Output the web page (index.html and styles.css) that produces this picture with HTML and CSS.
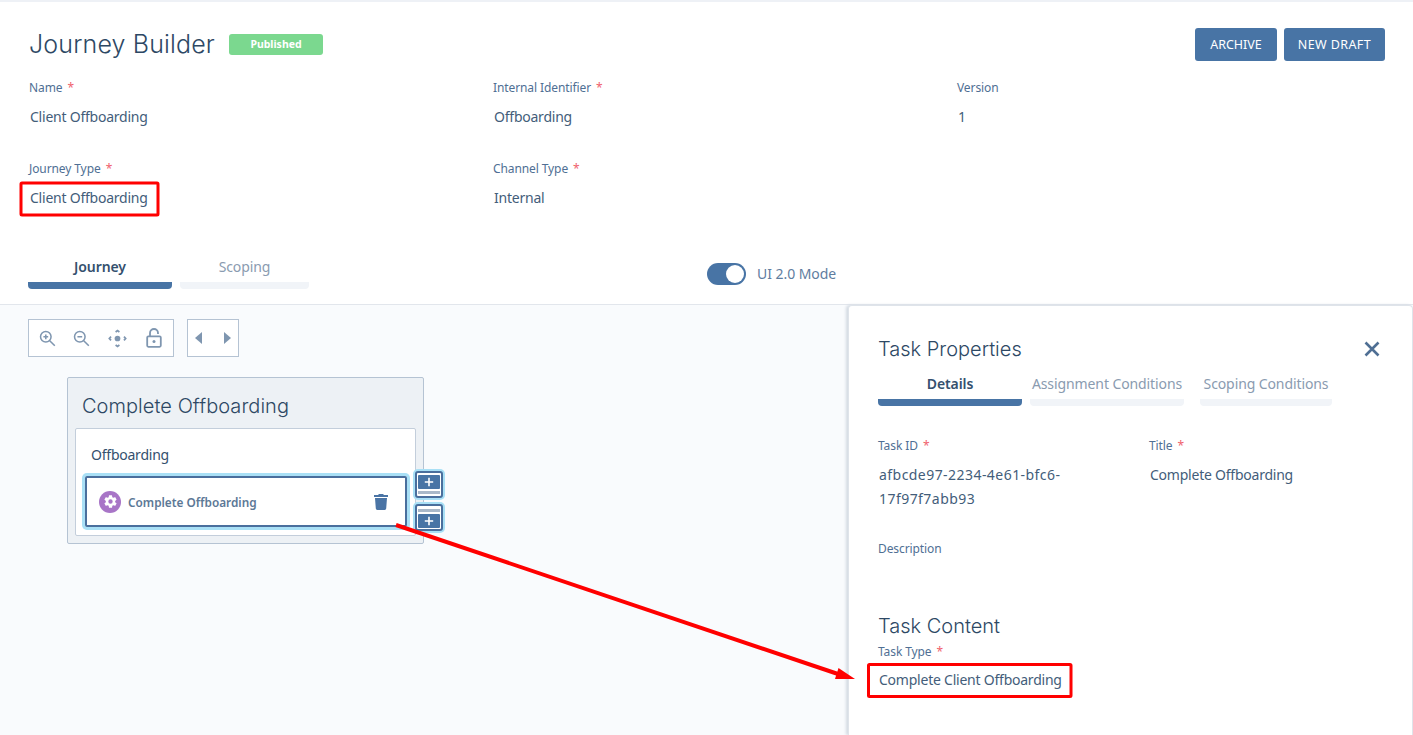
FILE: index.html
```html
<!DOCTYPE html>
<html lang="en">
<head>
    <meta charset="UTF-8">
    <meta name="viewport" content="width=device-width, initial-scale=1.0">
    <title>Journey Builder</title>
    <link rel="stylesheet" href="styles.css">
</head>
<body>
    <div class="page">
        <header class="header">
            <div class="title-row">
                <div class="title-left">
                    <h1 class="page-title">Journey Builder</h1>
                    <span class="status-badge">Published</span>
                </div>
                <div class="actions">
                    <button class="btn btn-archive">ARCHIVE</button>
                    <button class="btn btn-draft">NEW DRAFT</button>
                </div>
            </div>
            <div class="field-grid">
                <div class="field">
                    <p class="field-label">Name <span class="req">*</span></p>
                    <p class="field-value">Client Offboarding</p>
                </div>
                <div class="field">
                    <p class="field-label">Internal Identifier <span class="req">*</span></p>
                    <p class="field-value">Offboarding</p>
                </div>
                <div class="field">
                    <p class="field-label">Version</p>
                    <p class="field-value">1</p>
                </div>
                <div class="field">
                    <p class="field-label">Journey Type <span class="req">*</span></p>
                    <p class="field-value">Client Offboarding</p>
                </div>
                <div class="field">
                    <p class="field-label">Channel Type <span class="req">*</span></p>
                    <p class="field-value">Internal</p>
                </div>
            </div>
            <div class="tab-row">
                <div class="tabs">
                    <div class="tab tab-active tab-journey">Journey</div>
                    <div class="tab tab-scoping">Scoping</div>
                </div>
                <div class="mode-toggle">
                    <span class="switch"><span class="switch-knob"></span></span>
                    <span class="mode-label">UI 2.0 Mode</span>
                </div>
            </div>
        </header>

        <main class="workspace">
            <section class="stage">
                <div class="toolbars">
                    <div class="toolbar toolbar-zoom">
                        <svg class="tool-icon" viewBox="0 0 20 20"><circle cx="8" cy="8" r="6.2"/><path d="M12.6 12.6 18.6 18.6M8 5.2v5.6M5.2 8h5.6"/></svg>
                        <svg class="tool-icon" viewBox="0 0 20 20"><circle cx="8" cy="8" r="6.2"/><path d="M12.6 12.6 18.6 18.6M5.2 8h5.6"/></svg>
                        <svg class="tool-icon tool-move" viewBox="0 0 20 20"><circle class="fill" cx="10" cy="10" r="3"/><path d="M8 3.2 10 1.6l2 1.6M8 16.8l2 1.6 2-1.6M3.2 8 1.4 10l1.8 2M16.8 8l1.8 2-1.8 2"/></svg>
                        <svg class="tool-icon tool-lock" viewBox="0 0 20 20"><rect x="3.2" y="8.4" width="13.6" height="10.4" rx="1.2"/><path d="M6 8.4V5a4 4 0 0 1 8 0v1"/><circle class="fill" cx="10" cy="13.4" r="1.5"/></svg>
                    </div>
                    <div class="toolbar toolbar-nav">
                        <span class="arrow-left"></span>
                        <span class="arrow-right"></span>
                    </div>
                </div>

                <div class="stage-card">
                    <h2 class="stage-title">Complete Offboarding</h2>
                    <div class="stage-group">
                        <p class="group-name">Offboarding</p>
                        <div class="task-row">
                            <span class="task-icon">
                                <svg viewBox="0 0 24 24" width="15" height="15"><path fill="#fff" d="M19.4 13c.04-.33.06-.66.06-1s-.02-.67-.06-1l2.1-1.65a.5.5 0 0 0 .12-.64l-2-3.46a.5.5 0 0 0-.6-.22l-2.5 1a7.3 7.3 0 0 0-1.7-1l-.38-2.65A.5.5 0 0 0 14 2h-4a.5.5 0 0 0-.5.42L9.13 5.07a7.6 7.6 0 0 0-1.7 1l-2.48-1a.5.5 0 0 0-.61.22l-2 3.46a.5.5 0 0 0 .12.64L4.56 11a8 8 0 0 0 0 2l-2.1 1.65a.5.5 0 0 0-.12.64l2 3.46c.12.22.38.3.6.22l2.5-1c.52.4 1.08.73 1.7 1l.37 2.65c.05.24.26.42.5.42h4c.25 0 .46-.18.5-.42l.37-2.65a7.6 7.6 0 0 0 1.7-1l2.48 1c.23.08.49 0 .61-.22l2-3.46a.5.5 0 0 0-.12-.64zM12 15.5a3.5 3.5 0 1 1 0-7 3.5 3.5 0 0 1 0 7z"/></svg>
                            </span>
                            <span class="task-name">Complete Offboarding</span>
                            <svg class="trash" viewBox="0 0 14 16" width="14" height="16"><path fill="#4a74a5" d="M5 0h4l1 1h4v2H0V1h4zM1 4h12l-.8 10.6A1.5 1.5 0 0 1 10.7 16H3.3a1.5 1.5 0 0 1-1.5-1.4z"/></svg>
                        </div>
                    </div>
                    <button class="add-btn add-above">
                        <svg viewBox="0 0 22 20" width="22" height="20"><rect class="add-box" width="22" height="14" rx="1"/><path class="add-plus" d="M11 2.8v8.4M6.8 7h8.4"/><rect class="add-bar" y="16" width="22" height="3"/></svg>
                    </button>
                    <button class="add-btn add-below">
                        <svg viewBox="0 0 22 20" width="22" height="20"><rect class="add-bar" y="1" width="22" height="3"/><rect class="add-box" y="6" width="22" height="14" rx="1"/><path class="add-plus" d="M11 8.8v8.4M6.8 13h8.4"/></svg>
                    </button>
                </div>
            </section>

            <aside class="panel">
                <div class="panel-head">
                    <h2 class="panel-title">Task Properties</h2>
                    <svg class="panel-close" viewBox="0 0 16 16" width="16" height="16"><path d="M1.5 1.5l13 13M14.5 1.5l-13 13"/></svg>
                </div>
                <div class="panel-tabs">
                    <div class="tab tab-active tab-details">Details</div>
                    <div class="tab tab-assign">Assignment Conditions</div>
                    <div class="tab tab-scope">Scoping Conditions</div>
                </div>
                <div class="panel-fields">
                    <div class="field">
                        <p class="field-label">Task ID <span class="req">*</span></p>
                        <p class="field-value field-id">afbcde97-2234-4e61-bfc6-17f97f7abb93</p>
                    </div>
                    <div class="field">
                        <p class="field-label">Title <span class="req">*</span></p>
                        <p class="field-value">Complete Offboarding</p>
                    </div>
                </div>
                <p class="field-label panel-desc">Description</p>
                <h3 class="content-title">Task Content</h3>
                <p class="field-label type-label">Task Type <span class="req">*</span></p>
                <p class="field-value task-type">Complete Client Offboarding</p>
            </aside>
        </main>

        <!-- annotations drawn on top of the screen -->
        <svg class="markup" viewBox="0 0 1413 735" width="1413" height="735">
            <rect x="21" y="183" width="137" height="32" rx="1"/>
            <rect x="868.5" y="664.5" width="202.5" height="32" rx="1"/>
            <path class="markup-line" d="M396 525 838 674"/>
            <path class="markup-head" d="M855 679 838.5 668 835 679z"/>
        </svg>
    </div>
</body>
</html>
```

FILE: styles.css
```css
* {
    box-sizing: border-box;
}
body {
    margin: 0;
    font-family: "Noto Sans", sans-serif;
    color: #2f4a68;
    background: #fff;
}
p, h1, h2, h3 {
    margin: 0;
    font-weight: normal;
}
.page {
    position: relative;
    width: 1413px;
    height: 735px;
    overflow: hidden;
    display: flex;
    flex-direction: column;
    border-top: 2px solid #eef1f6;
}

/* header */
.header {
    height: 302px;
    padding: 26px 28px 0 29px;
    flex: none;
}
.title-row {
    display: flex;
    justify-content: space-between;
    align-items: flex-start;
    height: 51px;
}
.title-left {
    display: flex;
    align-items: center;
    gap: 14px;
    height: 33px;
}
.page-title {
    font-family: Inter, sans-serif;
    font-weight: 300;
    font-size: 25px;
    line-height: 30px;
    margin-bottom: 1px;
    letter-spacing: 0.15px;
    color: #2d4864;
}
.status-badge {
    width: 94px;
    height: 21px;
    line-height: 20px;
    text-align: center;
    font-size: 10.5px;
    font-weight: 700;
    color: #fff;
    background: #7bd88f;
    border-radius: 3px;
}
.actions {
    display: flex;
    gap: 7px;
}
.btn {
    height: 33px;
    border: 0;
    border-radius: 3px;
    background: #4874a5;
    color: #fff;
    font-family: "Noto Sans", sans-serif;
    font-size: 12.5px;
    padding: 0;
}
.btn-archive {
    width: 82px;
}
.btn-draft {
    width: 101px;
    letter-spacing: 0.4px;
}
.field-grid {
    display: grid;
    grid-template-columns: 464px 464px 1fr;
    grid-auto-rows: 81px;
}
.field-label {
    font-size: 12px;
    line-height: 18px;
    letter-spacing: -0.1px;
    color: #4f6f94;
}
.req {
    color: #f0616d;
    margin-left: 2px;
}
.field-value {
    font-size: 14px;
    line-height: 24px;
    letter-spacing: -0.23px;
    margin-top: 8px;
    padding-left: 1px;
    color: #435d7a;
}
.tab-row {
    display: flex;
    margin-top: 17px;
    margin-left: -1px;
}
.tabs {
    display: flex;
    gap: 8px;
}
.tab {
    height: 31px;
    text-align: center;
    font-size: 14px;
    line-height: 18px;
    letter-spacing: -0.1px;
    color: #8a9bb0;
    border-bottom: 7px solid #f1f4f8;
    border-radius: 0 0 4px 4px;
}
.tab-active {
    font-weight: 600;
    color: #34506e;
    border-bottom-color: #4874a5;
}
.tab-journey {
    width: 144px;
}
.tab-scoping {
    width: 129px;
}
.mode-toggle {
    display: flex;
    align-items: center;
    gap: 11px;
    margin-left: 398px;
    height: 32px;
}
.switch {
    display: flex;
    justify-content: flex-end;
    align-items: center;
    width: 39px;
    height: 22px;
    padding-right: 2px;
    border-radius: 11px;
    background: #4874a5;
}
.switch-knob {
    width: 18px;
    height: 18px;
    border-radius: 50%;
    background: #fff;
}
.mode-label {
    font-size: 14px;
    letter-spacing: -0.05px;
    margin-bottom: 2px;
    color: #5f7d9f;
}

/* canvas */
.workspace {
    flex: 1;
    display: flex;
    background: #f9fbfd;
    border-top: 1px solid #e2e6ec;
}
.stage {
    flex: 1;
    padding: 14px 0 0 28px;
}
.toolbars {
    display: flex;
    gap: 13px;
}
.toolbar {
    height: 38px;
    display: flex;
    align-items: center;
    background: #fff;
    border: 1px solid #b5c3d3;
}
.toolbar-zoom {
    width: 146px;
    padding: 0 9px 0 10px;
    justify-content: space-between;
}
.toolbar-nav {
    width: 52px;
    padding: 0 7px;
    justify-content: space-between;
}
.tool-icon {
    width: 17px;
    height: 17px;
    fill: none;
    stroke: #7f96b0;
    stroke-width: 1.8;
}
.tool-icon .fill {
    fill: #7f96b0;
    stroke: none;
}
.tool-move {
    width: 19px;
    height: 19px;
}
.tool-lock {
    width: 20px;
    height: 20px;
}
.arrow-left, .arrow-right {
    width: 0;
    height: 0;
    border-top: 6px solid transparent;
    border-bottom: 6px solid transparent;
}
.arrow-left {
    border-right: 7px solid #7f96b0;
}
.arrow-right {
    border-left: 7px solid #7f96b0;
}
.stage-card {
    position: relative;
    width: 357px;
    height: 167px;
    margin: 20px 0 0 39px;
    padding: 0 7px;
    background: #edf1f5;
    border: 1px solid #b5c3d3;
    border-radius: 2px;
}
.stage-title {
    font-family: Inter, sans-serif;
    font-weight: 300;
    font-size: 20px;
    line-height: 26px;
    letter-spacing: 0.05px;
    margin: 15px 0 9px 7px;
    color: #2d4864;
}
.stage-group {
    height: 108px;
    padding: 0 8px;
    background: #fff;
    border: 1px solid #c3cedb;
    border-radius: 2px;
}
.group-name {
    font-size: 14px;
    line-height: 20px;
    letter-spacing: -0.23px;
    padding-top: 16px;
    margin: 0 0 11px 7px;
    color: #34506e;
}
.task-row {
    display: flex;
    align-items: center;
    height: 51px;
    margin-left: 1px;
    padding: 0 17px 0 12px;
    border: 2px solid #4a6f9d;
    border-radius: 2px;
    box-shadow: 0 0 0 3px #a9e0f6;
}
.task-icon {
    display: flex;
    align-items: center;
    justify-content: center;
    width: 22px;
    height: 22px;
    border-radius: 50%;
    background: #a875c7;
}
.task-name {
    flex: 1;
    margin-left: 7px;
    font-size: 11.8px;
    font-weight: 600;
    color: #5c7896;
}
.add-btn {
    position: absolute;
    left: 347px;
    width: 28px;
    height: 27px;
    padding: 0;
    display: flex;
    align-items: center;
    justify-content: center;
    background: #fff;
    border: 2px solid #4a6f9d;
    border-radius: 3px;
    box-shadow: 0 0 0 2px #a9e0f6;
}
.add-above {
    top: 93px;
}
.add-below {
    top: 126px;
}
.add-box {
    fill: #4874a5;
}
.add-bar {
    fill: #a9b8c9;
}
.add-plus {
    fill: none;
    stroke: #fff;
    stroke-width: 1.6;
}

/* task panel */
.panel {
    width: 565px;
    padding: 28px 30px 0 29px;
    background: #fff;
    border: 1px solid #dfe4ea;
    border-bottom: 0;
    border-radius: 4px 4px 0 0;
    box-shadow: -2px 0 3px #d3dae2;
}
.panel-head {
    display: flex;
    justify-content: space-between;
    align-items: center;
    height: 30px;
    padding-right: 2px;
}
.panel-title {
    font-family: Inter, sans-serif;
    font-weight: 300;
    font-size: 20px;
    color: #2d4864;
}
.panel-close {
    fill: none;
    stroke: #4f6f94;
    stroke-width: 2.6;
}
.panel-tabs {
    display: flex;
    gap: 8px;
    margin-top: 11px;
}
.tab-details {
    width: 144px;
}
.tab-assign {
    width: 154px;
}
.tab-scope {
    width: 132px;
    margin-left: 8px;
}
.panel-fields {
    display: grid;
    grid-template-columns: 271px 1fr;
    margin-top: 31px;
    height: 103px;
}
.field-id {
    width: 215px;
    letter-spacing: 0.45px;
}
.content-title {
    font-family: Inter, sans-serif;
    font-weight: 300;
    font-size: 20px;
    line-height: 26px;
    margin-top: 55px;
    color: #2d4864;
}
.type-label {
    margin-top: 4px;
}
.task-type {
    margin-top: 7px;
}

/* red annotations */
.markup {
    position: absolute;
    left: 0;
    top: -2px;
    pointer-events: none;
}
.markup rect {
    fill: none;
    stroke: #f00;
    stroke-width: 3;
}
.markup .markup-line {
    fill: none;
    stroke: #f00;
    stroke-width: 4;
}
.markup .markup-head {
    fill: #f00;
}
```
